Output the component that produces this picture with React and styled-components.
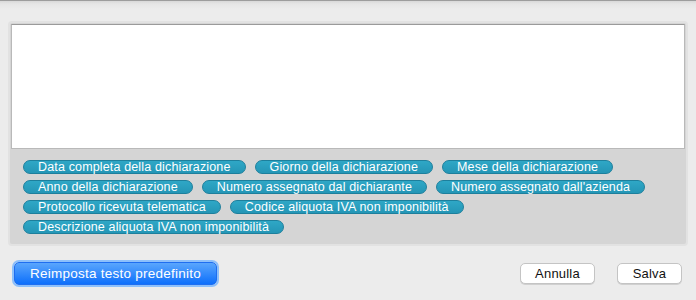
import React from 'react';
import styled, { createGlobalStyle } from 'styled-components';

const GlobalStyle = createGlobalStyle`
  html, body {
    margin: 0;
    padding: 0;
    background: #ececec;
    font-family: "Liberation Sans", Arial, sans-serif;
  }
`

const Sheet = styled.div`
  width: 696px;
  height: 300px;
  box-sizing: border-box;
  border-top: 1px solid #9d9d9d;
  background: linear-gradient(#d9d9d9 0px, #e6e6e6 3px, #ececec 8px);
  padding: 20px 8px 0;
  display: flex;
  flex-direction: column;
`

const Frame = styled.div`
  border: 2px solid #e2e2e2;
  border-radius: 4px;
  background: #d5d5d5;
  height: 225px;
  box-sizing: border-box;
  display: flex;
  flex-direction: column;
`

const TextArea = styled.div`
  margin: 1px 1px 0;
  height: 125px;
  box-sizing: border-box;
  background: #fff;
  border: 1px solid #b9b9b9;
  border-top-color: #9a9a9a;
`

const Tokens = styled.div`
  display: flex;
  flex-wrap: wrap;
  gap: 6px 9px;
  padding: 11px 12px 0 13px;
`

const Token = styled.span`
  display: inline-flex;
  align-items: center;
  height: 14px;
  box-sizing: border-box;
  padding: 0 14px;
  border: 1px solid #1d7f9c;
  border-radius: 8px;
  background: linear-gradient(#2fa7c6, #2496b6);
  color: #fff;
  font-size: 12.5px;
  letter-spacing: 0.15px;
  line-height: 12px;
  white-space: nowrap;
`

const Footer = styled.div`
  display: flex;
  align-items: center;
  padding: 16px 6px 0 6px;
`

const Button = styled.button`
  font-family: "Liberation Sans", Arial, sans-serif;
  font-size: ${p => (p.primary ? '13.5px' : '13px')};
  letter-spacing: ${p => (p.primary ? '0.25px' : '0.2px')};
  height: ${p => (p.primary ? '23px' : '21px')};
  padding: 0 ${p => (p.primary ? '15px' : '0')};
  width: ${p => p.width || 'auto'};
  border-radius: 5px;
  cursor: pointer;
  color: ${p => (p.primary ? '#fff' : '#111')};
  border: 1px solid ${p => (p.primary ? '#1f6ef0' : '#c4c4c4')};
  background: ${p => (p.primary ? 'linear-gradient(#5aa6fd, #0d6ffb)' : '#fff')};
  box-shadow: ${p => (p.primary ? '0 0 0 2px #8dc0fb' : '0 1px 0 #d0d0d0')};
  margin-left: ${p => p.gap || '0'};
`

const Spacer = styled.div`
  flex: 1;
`

const tokens = [
  'Data completa della dichiarazione',
  'Giorno della dichiarazione',
  'Mese della dichiarazione',
  'Anno della dichiarazione',
  'Numero assegnato dal dichiarante',
  "Numero assegnato dall'azienda",
  'Protocollo ricevuta telematica',
  'Codice aliquota IVA non imponibilità',
  'Descrizione aliquota IVA non imponibilità',
]

const App = () => (
  <>
    <GlobalStyle />
    <Sheet>
      <Frame>
        <TextArea />
        <Tokens>
          {tokens.map(t => (
            <Token key={t}>{t}</Token>
          ))}
        </Tokens>
      </Frame>
      <Footer>
        <Button primary>Reimposta testo predefinito</Button>
        <Spacer />
        <Button width="75px">Annulla</Button>
        <Button width="65px" gap="22px">Salva</Button>
      </Footer>
    </Sheet>
  </>
)

export default App;
